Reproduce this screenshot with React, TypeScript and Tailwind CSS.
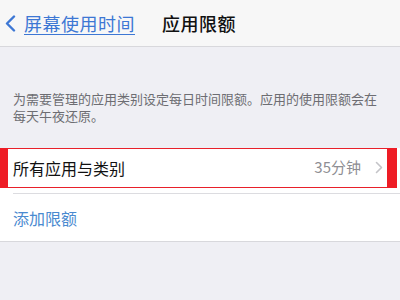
import React from 'react';

const font = { fontFamily: '"Noto Sans CJK SC", "Liberation Sans", sans-serif' };

export default function App() {
  return (
    <div className="w-[400px] h-[300px] overflow-hidden bg-[#efeff4]" style={font}>
      {/* nav bar */}
      <div className="h-[47px] bg-[#f7f7f7] border-b border-[#d8d8dc] flex items-center">
        <div className="flex items-center pl-[5px] w-[162px]">
          <svg width="11" height="17" viewBox="0 0 11 17" className="mr-[8px]">
            <path d="M9 1.5 L2 8.5 L9 15.5" fill="none" stroke="#3d77d4" strokeWidth="2.4" strokeLinecap="round" strokeLinejoin="round" />
          </svg>
          <span className="text-[18px] leading-none text-[#3d77d4] underline underline-offset-[3px] decoration-[1px] tracking-[0.5px]">
            屏幕使用时间
          </span>
        </div>
        <span className="text-[18px] leading-none text-[#111] font-medium tracking-[0.5px]">应用限额</span>
      </div>

      {/* description */}
      <div className="pt-[43px] pb-[24px] px-[13px]">
        <p className="text-[13px] leading-[17px] text-[#6d6d72] w-[374px]">
          为需要管理的应用类别设定每日时间限额。应用的使用限额会在每天午夜还原。
        </p>
      </div>

      {/* list */}
      <div className="bg-white border-b border-[#d8d8dc]">
        <div className="relative h-[45px] flex items-center pl-[13px] pr-[15px]">
          <span className="text-[16px] text-[#111] flex-1 pb-[6px]">所有应用与类别</span>
          <span className="text-[15px] text-[#8e8e93] pb-[6px] mr-[14px]">35分钟</span>
          <svg width="8" height="13" viewBox="0 0 8 13" className="mb-[6px] mr-[2px]">
            <path d="M1.5 1.5 L6.5 6.5 L1.5 11.5" fill="none" stroke="#c4c4c8" strokeWidth="1.6" strokeLinecap="round" strokeLinejoin="round" />
          </svg>
          {/* red annotation box */}
          <div className="absolute left-0 top-0 w-[397px] h-[40px] border border-[#e8202a]">
            <div className="absolute left-[-1px] top-[-1px] w-[8px] h-[40px] bg-[#ee1c25]" />
            <div className="absolute right-[-1px] top-[-1px] w-[10px] h-[40px] bg-[#ee1c25]" />
          </div>
        </div>
        <div className="ml-[13px] border-t border-[#dcdce0]" />
        <div className="h-[47px] flex items-center px-[13px]">
          <span className="text-[16px] text-[#4a8ad0]">添加限额</span>
        </div>
      </div>
    </div>
  );
}
